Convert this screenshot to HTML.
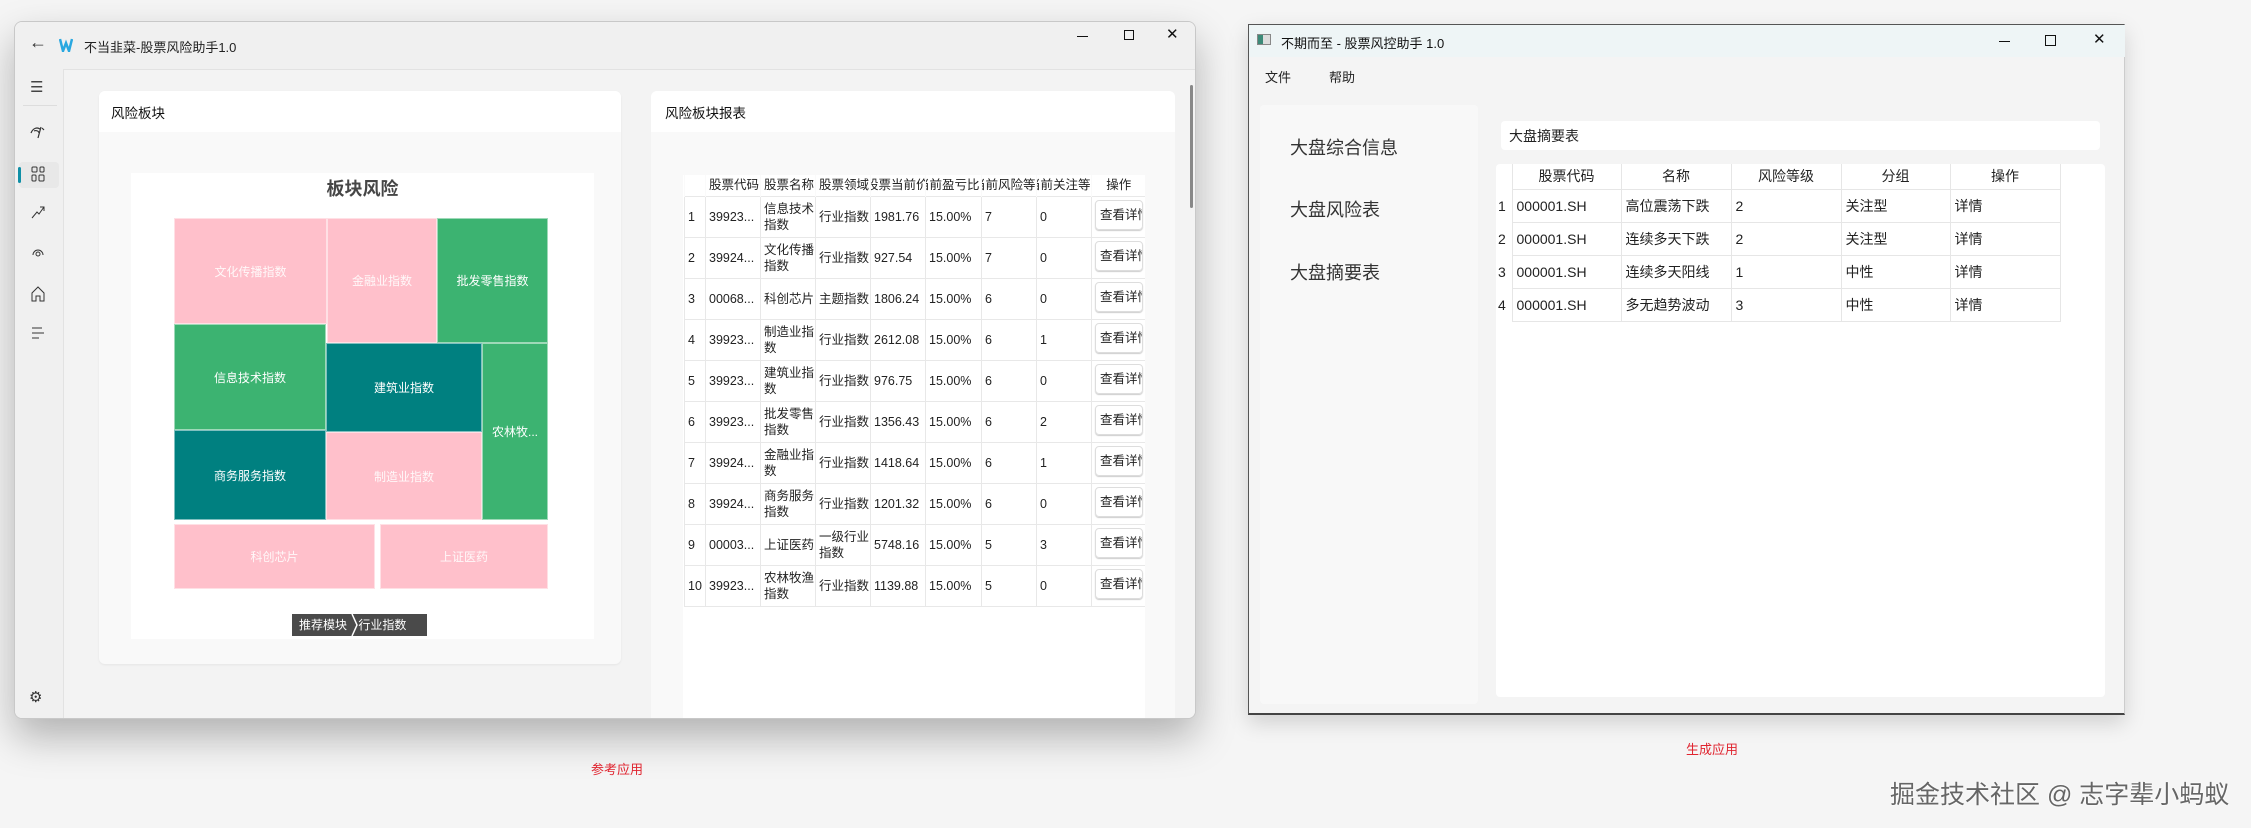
<!DOCTYPE html>
<html><head><meta charset="utf-8"><style>
*{box-sizing:border-box;margin:0;padding:0}
body{width:2251px;height:828px;background:#f5f5f5;position:relative;overflow:hidden;font-family:"Liberation Sans","Noto Sans CJK SC",sans-serif;color:#222}
.a{position:absolute}
.win1{left:14px;top:21px;width:1182px;height:698px;background:#f0f0f0;border:1px solid #c8c8c8;border-radius:8px;box-shadow:0 18px 40px rgba(0,0,0,.28);overflow:hidden}
.cell{position:absolute;display:flex;align-items:center;justify-content:center;color:#fff;font-size:12px;border:1px solid rgba(255,255,255,.5)}
.pk{background:#ffc0cb;color:#fff8f9}.gr{background:#3cb371}.tl{background:#008080}
table{border-collapse:collapse}
.t1 td,.t1 th{font-size:12.5px;font-weight:normal;border:1px solid #e8e8e8;height:41px;padding:0 3px;text-align:left;white-space:nowrap;overflow:hidden;line-height:16px}
.t1 th{height:21px;border:none;border-left:1px solid #fafafa}
.btn{display:inline-block;border:1px solid #ddd;border-radius:4px;padding:6px 4px;width:48px;overflow:hidden;box-shadow:0 1px 1px #ccc}
.t2 td,.t2 th{font-size:14px;font-weight:normal;border:1px solid #e6e6e6;height:33px;padding:0 4px;text-align:left;white-space:nowrap}
.t2 th{height:25px;text-align:center;border-top:none}
</style></head><body>

<div class="win1 a">
  <div class="a" style="left:0;top:0;width:1182px;height:47px;background:#f0f0f0"></div>
  <div class="a" style="left:14px;top:10px;font-size:18px;color:#333">←</div>
  <svg class="a" style="left:44px;top:16px" width="14" height="14" viewBox="0 0 14 14"><path d="M1 1 L4 13 L7 5 L10 13 L13 1" stroke="#29a8e0" stroke-width="2.5" fill="none"/></svg>
  <div class="a" style="left:69px;top:15px;font-size:13px;color:#222">不当韭菜-股票风险助手1.0</div>
  <div class="a" style="left:1062px;top:14px;width:11px;height:1px;background:#111"></div>
  <div class="a" style="left:1109px;top:8px;width:10px;height:10px;border:1px solid #111"></div>
  <div class="a" style="left:1151px;top:3px;font-size:15px;color:#111">✕</div>
  <!-- sidebar -->
  <div class="a" style="left:0;top:47px;width:48px;height:651px;background:#f0f0f0"></div>
  <div class="a" style="left:8px;top:83px;width:34px;height:1px;background:#ddd"></div>
  <div class="a" style="left:15px;top:56px;font-size:15px;color:#444">☰</div>
  <svg class="a" style="left:15px;top:103px" width="16" height="14" viewBox="0 0 16 14"><path d="M1 8 C3 3 7 2 10 4 M4 6 C6 5 9 6 9 8 M8 13 L11 2 M12 3 L14 5" stroke="#333" fill="none" stroke-width="1.2"/></svg>
  <div class="a" style="left:4px;top:140px;width:40px;height:26px;background:#e8e8e8;border-radius:4px"></div>
  <div class="a" style="left:3px;top:145px;width:3px;height:16px;background:#0f8fa6;border-radius:2px"></div>
  <svg class="a" style="left:16px;top:144px" width="14" height="16" viewBox="0 0 14 16"><rect x="1" y="1" width="5" height="5" rx="1" fill="none" stroke="#333"/><rect x="9" y="1" width="4" height="5" rx="1" fill="none" stroke="#333"/><rect x="1" y="9" width="4" height="6" rx="1" fill="none" stroke="#333"/><rect x="8" y="9" width="5" height="6" rx="1" fill="none" stroke="#333"/></svg>
  <svg class="a" style="left:16px;top:183px" width="14" height="14"><path d="M1 13 L6 7 L8 9 L13 2 M9 2 H13 V6" stroke="#333" fill="none"/></svg>
  <svg class="a" style="left:16px;top:223px" width="14" height="14"><path d="M2 10 A5 5 0 1 1 12 10" fill="none" stroke="#333"/><circle cx="7" cy="9" r="2" fill="none" stroke="#333"/></svg>
  <svg class="a" style="left:16px;top:264px" width="14" height="16"><path d="M1 7 L7 1 L13 7 V15 H9 V10 H5 V15 H1 Z" stroke="#333" fill="none"/></svg>
  <svg class="a" style="left:16px;top:304px" width="14" height="14"><path d="M1 2 H11 M1 7 H13 M1 12 H8" stroke="#333"/></svg>
  <div class="a" style="left:14px;top:666px;font-size:15px;color:#333">⚙</div>
  <!-- content -->
  <div class="a" style="left:48px;top:47px;width:1134px;height:651px;background:#f3f3f3;border-top:1px solid #e2e2e2;border-left:1px solid #e2e2e2"></div>
  <!-- left card -->
  <div class="a" style="left:84px;top:69px;width:522px;height:573px;background:#f9f9f9;border-radius:6px;box-shadow:0 1px 2px rgba(0,0,0,.06)"></div>
  <div class="a" style="left:84px;top:69px;width:522px;height:41px;background:#fff;border-radius:6px 6px 0 0"></div>
  <div class="a" style="left:96px;top:80px;font-size:13.5px;color:#111">风险板块</div>
  <div class="a" style="left:116px;top:151px;width:463px;height:466px;background:#fff"></div>
  <div class="a" style="left:116px;top:153px;width:463px;text-align:center;font-size:18px;font-weight:bold;color:#464646">板块风险</div>
  <div class="cell pk" style="left:159px;top:196px;width:153px;height:106px">文化传播指数</div>
  <div class="cell pk" style="left:312px;top:196px;width:110px;height:125px">金融业指数</div>
  <div class="cell gr" style="left:422px;top:196px;width:111px;height:125px">批发零售指数</div>
  <div class="cell gr" style="left:159px;top:302px;width:152px;height:106px">信息技术指数</div>
  <div class="cell tl" style="left:311px;top:321px;width:156px;height:89px">建筑业指数</div>
  <div class="cell gr" style="left:467px;top:321px;width:66px;height:177px">农林牧...</div>
  <div class="cell tl" style="left:159px;top:408px;width:152px;height:90px">商务服务指数</div>
  <div class="cell pk" style="left:311px;top:410px;width:156px;height:88px">制造业指数</div>
  <div class="cell pk" style="left:159px;top:502px;width:201px;height:65px">科创芯片</div>
  <div class="cell pk" style="left:365px;top:502px;width:168px;height:65px">上证医药</div>
  <div class="a" style="left:277px;top:592px;width:135px;height:22px;background:#4a4a4a;color:#fff;font-size:12px;line-height:22px;padding-left:7px">推荐模块 <span style="margin-left:8px">行业指数</span></div>
  <svg class="a" style="left:336px;top:592px" width="8" height="22"><path d="M1 0 L6 11 L1 22" stroke="#fff" stroke-width="1.5" fill="none"/></svg>
  <!-- right card -->
  <div class="a" style="left:636px;top:69px;width:524px;height:640px;background:#f9f9f9;border-radius:6px"></div>
  <div class="a" style="left:636px;top:69px;width:524px;height:41px;background:#fff;border-radius:6px 6px 0 0"></div>
  <div class="a" style="left:650px;top:80px;font-size:13.5px;color:#111">风险板块报表</div>
  <div class="a" style="left:668px;top:153px;width:462px;height:560px;background:#fff"></div>
  <div class="a" style="left:1175px;top:63px;width:3px;height:123px;background:#888;border-radius:2px"></div>
  <div class="a" style="left:669px;top:153px;width:461px;overflow:hidden">
  <table class="t1" style="width:461px;table-layout:fixed">
    <colgroup><col style="width:21px"><col style="width:55px"><col style="width:55px"><col style="width:55px"><col style="width:55px"><col style="width:56px"><col style="width:55px"><col style="width:55px"><col style="width:54px"></colgroup>
    <tr><th></th><th>股票代码</th><th>股票名称</th><th>股票领域</th><th style="text-indent:-8px">股票当前价</th><th style="text-indent:-12px">当前盈亏比</th><th style="text-indent:-12px">当前风险等</th><th style="text-indent:-12px">当前关注等</th><th style="text-align:center">操作</th></tr>
    <tr><td>1</td><td>39923...</td><td>信息技术<br>指数</td><td>行业指数</td><td>1981.76</td><td>15.00%</td><td>7</td><td>0</td><td><span class="btn">查看详情</span></td></tr>
    <tr><td>2</td><td>39924...</td><td>文化传播<br>指数</td><td>行业指数</td><td>927.54</td><td>15.00%</td><td>7</td><td>0</td><td><span class="btn">查看详情</span></td></tr>
    <tr><td>3</td><td>00068...</td><td>科创芯片</td><td>主题指数</td><td>1806.24</td><td>15.00%</td><td>6</td><td>0</td><td><span class="btn">查看详情</span></td></tr>
    <tr><td>4</td><td>39923...</td><td>制造业指<br>数</td><td>行业指数</td><td>2612.08</td><td>15.00%</td><td>6</td><td>1</td><td><span class="btn">查看详情</span></td></tr>
    <tr><td>5</td><td>39923...</td><td>建筑业指<br>数</td><td>行业指数</td><td>976.75</td><td>15.00%</td><td>6</td><td>0</td><td><span class="btn">查看详情</span></td></tr>
    <tr><td>6</td><td>39923...</td><td>批发零售<br>指数</td><td>行业指数</td><td>1356.43</td><td>15.00%</td><td>6</td><td>2</td><td><span class="btn">查看详情</span></td></tr>
    <tr><td>7</td><td>39924...</td><td>金融业指<br>数</td><td>行业指数</td><td>1418.64</td><td>15.00%</td><td>6</td><td>1</td><td><span class="btn">查看详情</span></td></tr>
    <tr><td>8</td><td>39924...</td><td>商务服务<br>指数</td><td>行业指数</td><td>1201.32</td><td>15.00%</td><td>6</td><td>0</td><td><span class="btn">查看详情</span></td></tr>
    <tr><td>9</td><td>00003...</td><td>上证医药</td><td>一级行业<br>指数</td><td>5748.16</td><td>15.00%</td><td>5</td><td>3</td><td><span class="btn">查看详情</span></td></tr>
    <tr><td>10</td><td>39923...</td><td>农林牧渔<br>指数</td><td>行业指数</td><td>1139.88</td><td>15.00%</td><td>5</td><td>0</td><td><span class="btn">查看详情</span></td></tr>
  </table></div>
</div>
<div class="a" style="left:560px;top:759px;font-size:13px;color:#e0242f;width:114px;text-align:center">参考应用</div>

<!-- right window -->
<div class="a" style="left:1248px;top:24px;width:877px;height:691px;background:#f4f4f4;border:1px solid #555;border-right-color:#ccc;border-bottom:2px solid #444;box-shadow:0 8px 20px rgba(0,0,0,.15)">
  <div class="a" style="left:0;top:0;width:876px;height:32px;background:#eef5f6"></div>
  <div class="a" style="left:8px;top:9px;width:14px;height:11px;border:1px solid #888;background:linear-gradient(90deg,#3d8a78 0 5px,#ddd 5px)"></div>
  <div class="a" style="left:32px;top:8px;font-size:13px;color:#111">不期而至 - 股票风控助手 1.0</div>
  <div class="a" style="left:750px;top:16px;width:11px;height:1px;background:#111"></div>
  <div class="a" style="left:796px;top:10px;width:11px;height:11px;border:1.5px solid #111"></div>
  <div class="a" style="left:844px;top:5px;font-size:15px;color:#111">✕</div>
  <div class="a" style="left:16px;top:42px;font-size:13px">文件</div>
  <div class="a" style="left:80px;top:42px;font-size:13px">帮助</div>
  <div class="a" style="left:11px;top:80px;width:218px;height:599px;background:#f8f8f8;border-radius:4px"></div>
  <div class="a" style="left:41px;top:109px;font-size:18px;color:#333">大盘综合信息</div>
  <div class="a" style="left:41px;top:171px;font-size:18px;color:#333">大盘风险表</div>
  <div class="a" style="left:41px;top:234px;font-size:18px;color:#333">大盘摘要表</div>
  <div class="a" style="left:252px;top:96px;width:599px;height:29px;background:#fff;border-radius:4px;font-size:14px;padding:5px 8px;color:#222">大盘摘要表</div>
  <div class="a" style="left:247px;top:139px;width:609px;height:533px;background:#fff;border-radius:4px"></div>
  <div class="a" style="left:247px;top:139px">
  <table class="t2" style="table-layout:fixed;width:564px">
    <colgroup><col style="width:16px"><col style="width:109px"><col style="width:110px"><col style="width:110px"><col style="width:109px"><col style="width:110px"></colgroup>
    <tr><th style="border:none"></th><th>股票代码</th><th>名称</th><th>风险等级</th><th>分组</th><th>操作</th></tr>
    <tr><td style="border:none;padding:0 2px">1</td><td>000001.SH</td><td>高位震荡下跌</td><td>2</td><td>关注型</td><td>详情</td></tr>
    <tr><td style="border:none;padding:0 2px">2</td><td>000001.SH</td><td>连续多天下跌</td><td>2</td><td>关注型</td><td>详情</td></tr>
    <tr><td style="border:none;padding:0 2px">3</td><td>000001.SH</td><td>连续多天阳线</td><td>1</td><td>中性</td><td>详情</td></tr>
    <tr><td style="border:none;padding:0 2px">4</td><td>000001.SH</td><td>多无趋势波动</td><td>3</td><td>中性</td><td>详情</td></tr>
  </table></div>
</div>
<div class="a" style="left:1655px;top:739px;font-size:13px;color:#e0242f;width:114px;text-align:center">生成应用</div>
<div class="a" style="left:1890px;top:775px;font-size:25px;color:#666;text-shadow:0 0 2px #fff,0 0 2px #fff;white-space:nowrap">掘金技术社区 @ 志字辈小蚂蚁</div>
</body></html>
